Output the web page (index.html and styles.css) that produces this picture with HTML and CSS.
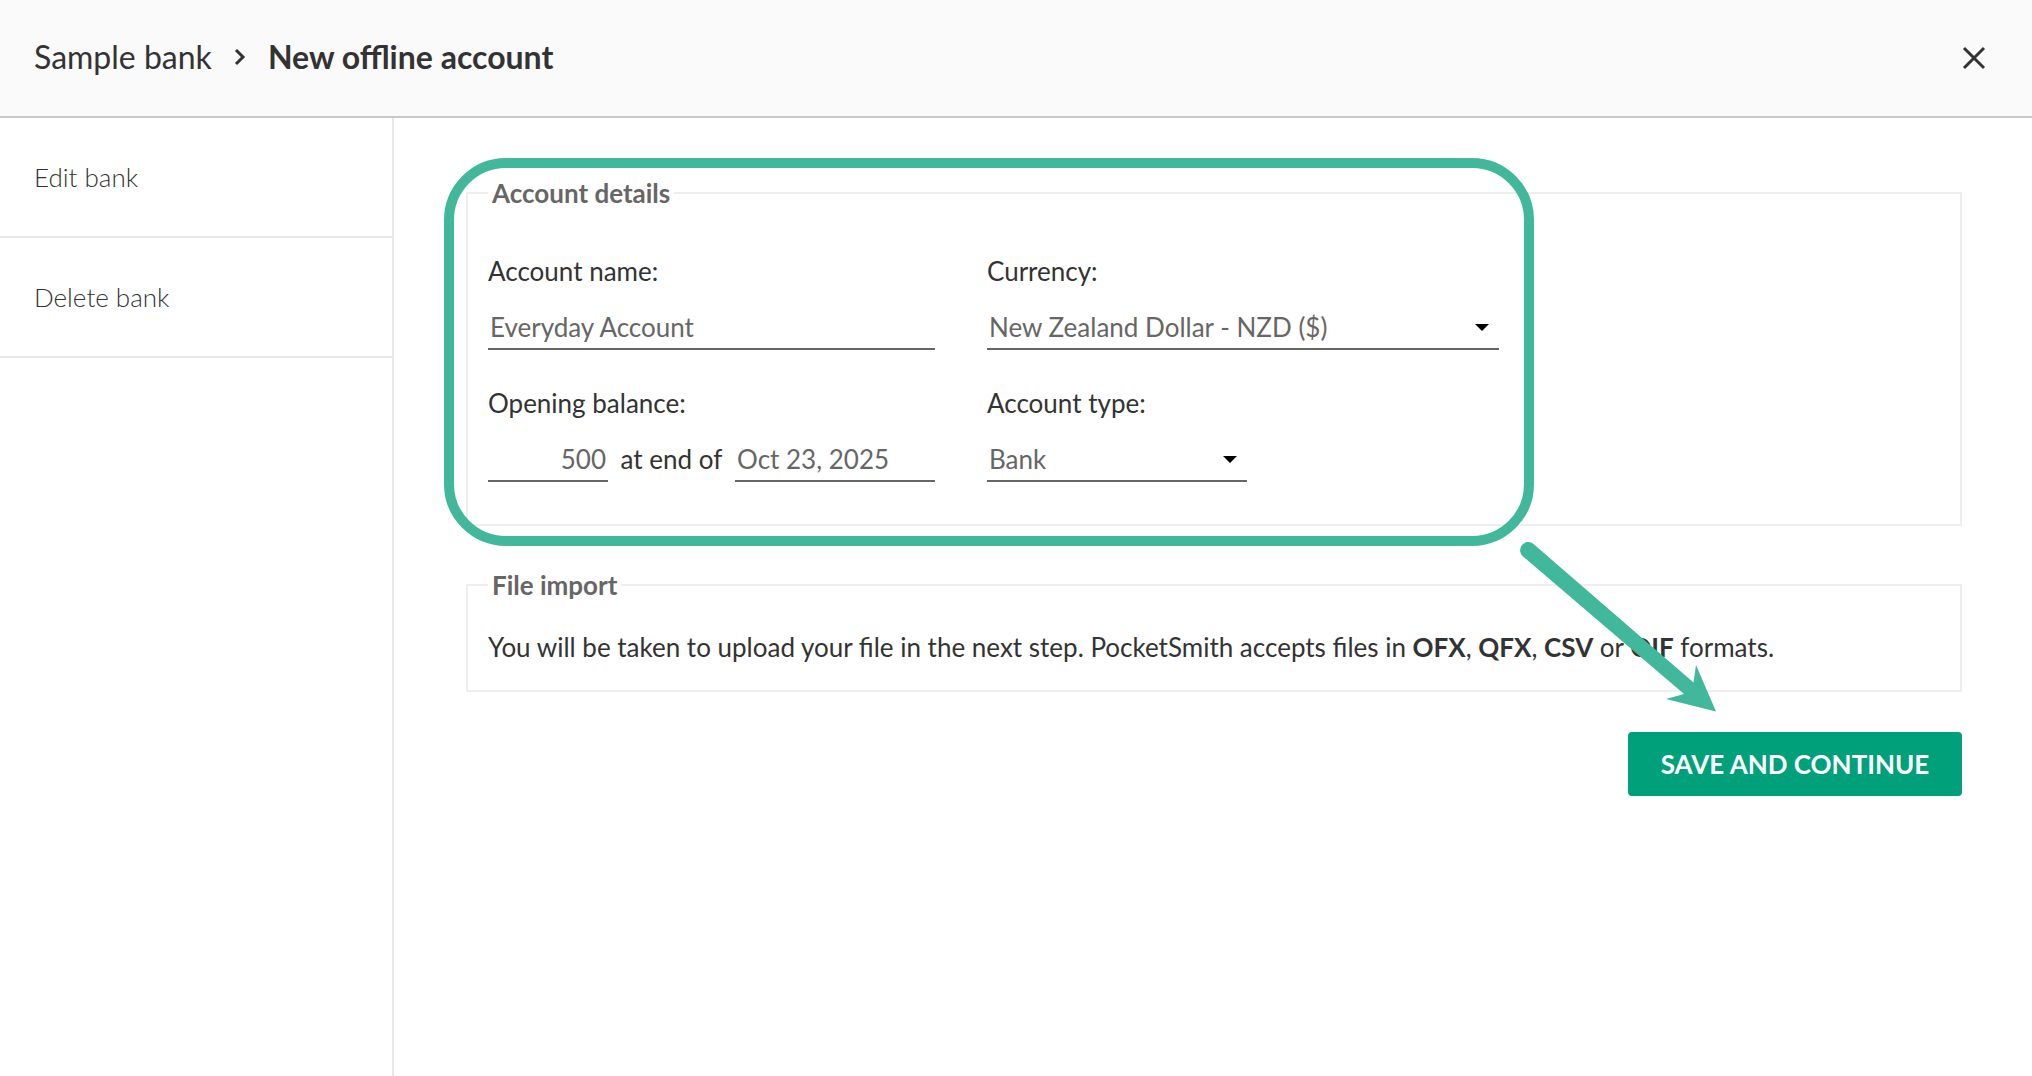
FILE: index.html
```html
<!DOCTYPE html>
<html lang="en">
<head>
<meta charset="utf-8">
<title>New offline account</title>
<link rel="stylesheet" href="styles.css">
</head>
<body>
<header class="header">
  <nav class="breadcrumb">
    <a href="#">Sample bank</a>
    <svg class="chevron" width="12" height="18" viewBox="0 0 12 18"><path d="M2 2l7 7-7 7"/></svg>
    <h1>New offline account</h1>
  </nav>
  <button type="button" class="close" aria-label="Close">
    <svg width="24" height="24" viewBox="0 0 24 24"><path d="M2 2l20 20M22 2L2 22"/></svg>
  </button>
</header>

<div class="page">
  <aside class="sidebar">
    <a href="#">Edit bank</a>
    <a href="#">Delete bank</a>
  </aside>

  <main class="content">
    <form>
      <fieldset class="details">
        <legend>Account details</legend>
        <div class="fields">
          <div class="field">
            <label for="name">Account name:</label>
            <input type="text" id="name" value="Everyday Account">
          </div>
          <div class="field">
            <label for="currency">Currency:</label>
            <div class="select">
              <select id="currency">
                <option>New Zealand Dollar - NZD ($)</option>
              </select>
            </div>
          </div>
          <div class="field">
            <label for="balance">Opening balance:</label>
            <div class="balance">
              <input type="text" id="balance" class="amount" value="500">
              <label for="date">at end of</label>
              <input type="text" id="date" class="date" value="Oct 23, 2025">
            </div>
          </div>
          <div class="field">
            <label for="type">Account type:</label>
            <div class="select short">
              <select id="type">
                <option>Bank</option>
              </select>
            </div>
          </div>
        </div>
        <div class="highlight"></div>
      </fieldset>

      <fieldset class="import">
        <legend>File import</legend>
        <p>You will be taken to upload your file in the next step. PocketSmith accepts files in <b>OFX</b>, <b>QFX</b>, <b>CSV</b> or <b>QIF</b> formats.</p>
      </fieldset>

      <div class="actions">
        <button type="submit" class="save">SAVE AND CONTINUE</button>
        <svg class="arrow" width="200" height="174" viewBox="0 0 200 174">
          <path d="M17.500 6L177.500 144.500L180 127L200 173.500L150 161L168 156L7 18.500A8 8 0 1 1 17.500 6Z"/>
        </svg>
      </div>
    </form>
  </main>
</div>
</body>
</html>
```
FILE: styles.css
```css
* {
  box-sizing: border-box;
}

body {
  margin: 0;
  min-height: 100vh;
  display: flex;
  flex-direction: column;
  background: #fff;
  color: #333;
  font-family: Lato, "Open Sans", sans-serif;
  font-size: 26px;
  line-height: 32px;
}

a {
  color: inherit;
  text-decoration: none;
}

input, select, button {
  font: inherit;
}

/* top bar */
.header {
  height: 118px;
  padding: 0 46px 0 34px;
  display: flex;
  align-items: center;
  justify-content: space-between;
  background: #fafafa;
  border-bottom: 2px solid #c8c8c8;
}

.breadcrumb {
  display: flex;
  align-items: center;
  gap: 22px;
  padding-bottom: 2px;
  font-size: 32px;
}

.breadcrumb h1 {
  margin: 0;
  font-size: 32px;
  font-weight: 700;
}

.chevron, .close svg {
  display: block;
  fill: none;
  stroke: #333;
  stroke-width: 3;
}

.close {
  padding: 0;
  border: none;
  background: none;
  cursor: pointer;
}

/* sidebar */
.page {
  flex: 1;
  display: flex;
}

.sidebar {
  width: 394px;
  flex-shrink: 0;
  border-right: 2px solid #e8e8e8;
}

.sidebar a {
  display: block;
  padding: 43px 34px;
  border-bottom: 2px solid #e8e8e8;
  font-weight: 300;
}

/* form */
.content {
  flex: 1;
  padding: 60px 70px 60px 72px;
}

fieldset {
  position: relative;
  margin: 0 0 44px;
  padding: 47px 20px 42px;
  border: 2px solid #eee;
}

legend {
  padding: 0 4px;
  color: #666;
  font-weight: 700;
  line-height: 30px;
}

.fields {
  display: grid;
  grid-template-columns: 447px 512px;
  gap: 37px 52px;
}

.field {
  display: flex;
  flex-direction: column;
  gap: 17px;
}

input, select {
  width: 100%;
  height: 46px;
  padding: 2px 2px 0;
  border: none;
  border-bottom: 2px solid #666;
  border-radius: 0;
  background: none;
  color: #666;
  appearance: none;
}

.select {
  position: relative;
}

.select::after {
  content: "";
  position: absolute;
  top: 20px;
  right: 10px;
  border: 7px solid transparent;
  border-top-color: #000;
  border-bottom: none;
  pointer-events: none;
}

.short {
  width: 260px;
}

.balance {
  display: flex;
  align-items: center;
  justify-content: space-between;
}

.amount {
  width: 120px;
  text-align: right;
}

.date {
  width: 200px;
}

.import {
  margin-bottom: 40px;
  padding: 31px 20px 27px;
}

.import p {
  margin: 0;
}

.actions {
  position: relative;
  display: flex;
  justify-content: flex-end;
}

.save {
  width: 334px;
  height: 64px;
  padding: 0;
  border: none;
  border-radius: 4px;
  background: #00a07a;
  color: #fff;
  font-weight: 700;
  cursor: pointer;
}

/* callouts over the form */
.highlight {
  position: absolute;
  top: -50px;
  left: -24px;
  width: 1090px;
  height: 388px;
  border: 10px solid #41b79b;
  border-radius: 62px;
  pointer-events: none;
}

.arrow {
  position: absolute;
  right: 246px;
  bottom: 84px;
  fill: #41b79b;
  overflow: visible;
  pointer-events: none;
}
```
